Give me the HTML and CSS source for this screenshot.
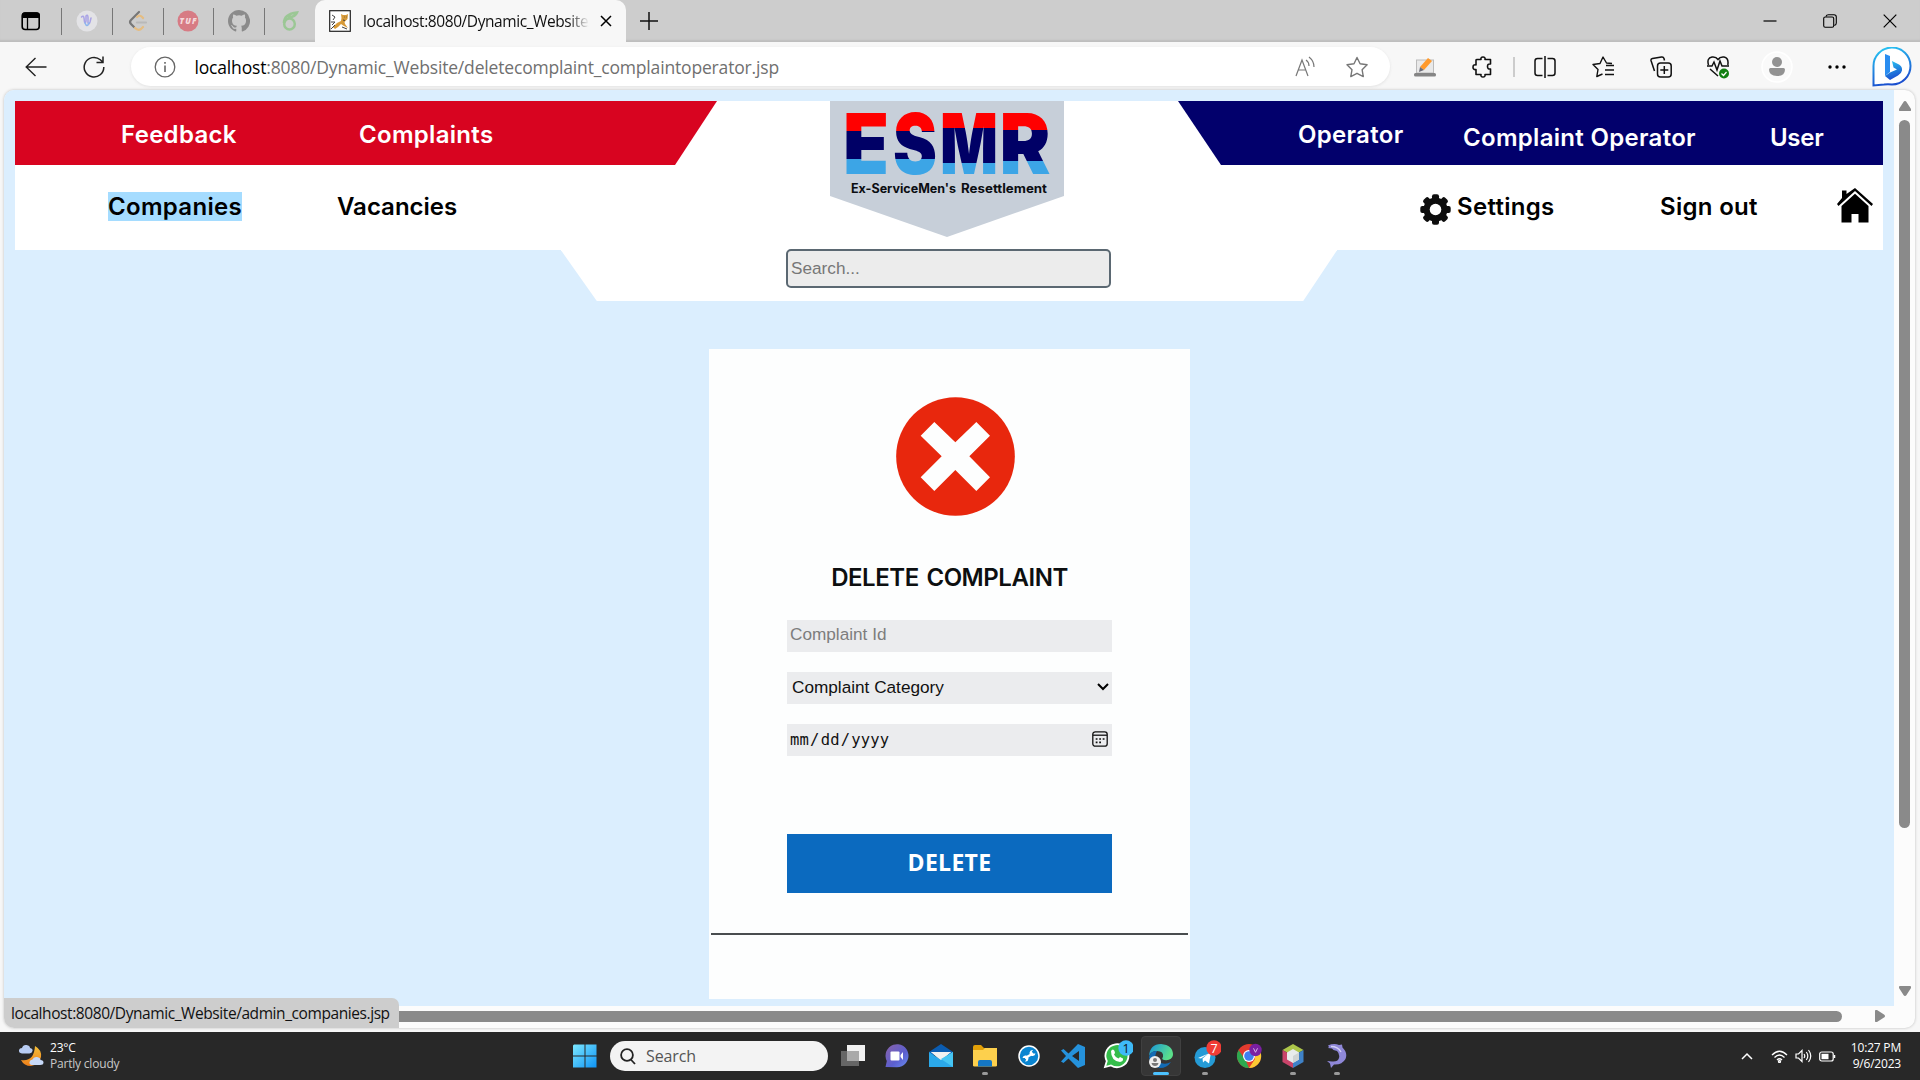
FILE: index.html
```
<!DOCTYPE html>
<html lang="en">
<head>
<meta charset="utf-8">
<title>Delete Complaint</title>
<link rel="stylesheet" href="styles.css">
</head>
<body>
<div class="screen">
  <div class="tabbar">
    <div class="pinned">
      <span class="pin first"><svg width="20" height="20" viewBox="0 0 20 20"><rect x="1.2" y="2" width="17" height="16.5" rx="3" fill="none" stroke="#000" stroke-width="1.6"/><path d="M1 7V4.5Q1 1.300 4 1.300H15.500Q19 1.300 19 4.500V7Z"/><path d="M6.500 7V18" stroke="#000" stroke-width="1.300"/></svg></span>
      <span class="pin"><svg width="22" height="22" viewBox="0 0 22 22"><circle cx="11" cy="11" r="10.500" fill="#e3e3e6"/><path d="M5.500 7q2-2 2.500 1l.5 4q1 2 1.500-1V6q1.500-2 2 1v6q1 2 2-1l1-4" fill="none" stroke="#a9a3e6" stroke-width="1.500" stroke-linecap="round"/><path d="M9 13q2 5 4 0" fill="none" stroke="#8fb6ee" stroke-width="1.600" stroke-linecap="round"/></svg></span>
      <span class="pin"><svg width="22" height="22" viewBox="0 0 22 22" fill="none" stroke-width="2.200" stroke-linecap="round"><path d="M12 2L4 10q-2 2 0 4l3 3" stroke="#777"/><path d="M8 18q3 3 6 1l2-2M10 7q3-3 6 1" stroke="#e5bd82"/><path d="M10 12.500h9" stroke="#b9b9b9"/></svg></span>
      <span class="pin"><svg width="22" height="22" viewBox="0 0 22 22"><circle cx="11" cy="11" r="10.500" fill="#d77b84"/><text x="2.500" y="14" class="tuf" textLength="17">TUF</text></svg></span>
      <span class="pin"><svg width="22" height="22" viewBox="0 0 16 16" fill="#8b8b8b"><path d="M8 0C3.580 0 0 3.580 0 8c0 3.540 2.290 6.530 5.470 7.590.4.070.55-.17.55-.38 0-.19-.01-.82-.01-1.490-2.010.37-2.530-.49-2.690-.94-.09-.23-.48-.94-.82-1.130-.28-.15-.68-.52-.01-.53.63-.01 1.080.58 1.230.82.72 1.210 1.870.87 2.330.66.070-.52.28-.87.51-1.070-1.780-.2-3.640-.89-3.640-3.950 0-.87.31-1.590.82-2.150-.08-.2-.36-1.020.08-2.120 0 0 .67-.21 2.200.82a7.500 7.500 0 0 1 4 0c1.530-1.040 2.200-.82 2.200-.82.44 1.100.16 1.920.08 2.120.51.56.82 1.270.82 2.150 0 3.070-1.870 3.750-3.650 3.950.29.25.54.73.54 1.480 0 1.070-.01 1.930-.01 2.200 0 .21.15.46.55.38A8 8 0 0 0 8 0Z"/></svg></span>
      <span class="pin last"><svg width="22" height="22" viewBox="0 0 22 22" fill="none" stroke="#9bc795" stroke-width="2.500"><ellipse cx="10.500" cy="14" rx="5.300" ry="5.500"/><path d="M5 13Q5 4 18 2.500q-2 5-9 4.500"/></svg></span>
    </div>
    <div class="tab">
      <svg width="22" height="22" viewBox="0 0 22 22"><rect x=".7" y=".7" width="20.600" height="20.600" fill="#fff" stroke="#222" stroke-width="1.200"/><path d="M4 17l4-4 4-2 .5-3L12 4l2 1h3l2-1-.5 5-3 3 .5 2 3 4-4-2-3-2-3 3-3 2Z" fill="#d79a38"/><path d="M3 5l3 2-2 3M2 19l4-4M15 7h.5M17 7h.5M14 10l2 .5M13 17l5 2M2 12h4l-3 3" stroke="#444" stroke-width="1" fill="none"/></svg>
      <span class="tab-title">localhost:8080/Dynamic_Website/</span>
      <svg class="tab-close" width="12" height="12" viewBox="0 0 12 12" stroke="#000" stroke-width="1.500"><path d="M1 1l10 10M11 1L1 11"/></svg>
    </div>
    <svg class="new-tab" width="18" height="18" viewBox="0 0 18 18" stroke="#111" stroke-width="1.500"><path d="M9 0v18M0 9h18"/></svg>
    <div class="win">
      <svg width="14" height="14" viewBox="0 0 14 14" stroke="#000" stroke-width="1.200"><path d="M.5 7h13"/></svg>
      <svg width="14" height="14" viewBox="0 0 14 14" fill="none" stroke="#000" stroke-width="1.100"><rect x=".7" y="3" width="10" height="10.300" rx="1.500"/><path d="M3 2.500Q3.500.7 5.500.7h5.500q2.300 0 2.300 2.300v6q0 2-2 2.500"/></svg>
      <svg width="14" height="14" viewBox="0 0 14 14" stroke="#000" stroke-width="1.200"><path d="M.7.7l12.600 12.600M13.300.7L.7 13.300"/></svg>
    </div>
  </div>

  <div class="toolbar">
    <span class="tb"><svg width="22" height="20" viewBox="0 0 22 20" fill="none" stroke="#222" stroke-width="1.400"><path d="M21.500 10H1M10.500 1L1.200 10l9.300 9"/></svg></span>
    <span class="tb"><svg width="22" height="22" viewBox="0 0 22 22" fill="none" stroke="#222" stroke-width="1.500"><path d="M20.800 11a9.800 9.800 0 1 1-3.500-7.300l2.400 2.300M20 .5v6h-6.500"/></svg></span>
    <div class="address">
      <svg width="22" height="22" viewBox="0 0 22 22" fill="none" stroke="#666" stroke-width="1.300"><circle cx="11" cy="11" r="9.800"/><path d="M11 9.500v6.500M11 6v1.700" stroke-width="1.600"/></svg>
      <span class="url"><b>localhost</b>:8080/Dynamic_Website/deletecomplaint_complaintoperator.jsp</span>
      <svg class="read" width="22" height="22" viewBox="0 0 22 22" fill="none" stroke="#777" stroke-width="1.200"><path d="M2 20L8 4l6 16M4 14h8M12 4q3 2 3 6M15 1q5 4 5 10"/></svg>
      <svg class="fav" width="24" height="22" viewBox="0 0 24 22" fill="none" stroke="#777" stroke-width="1.400" stroke-linejoin="round"><path d="M12 1.500l3.100 6.300 7 1-5 4.900 1.200 6.900-6.300-3.300-6.200 3.300 1.200-6.900-5-4.900 7-1Z"/></svg>
    </div>
    <span class="tb"><svg width="22" height="22" viewBox="0 0 22 22"><rect x="2.500" y="4" width="17" height="13" fill="#e9e9e9" stroke="#bbb"/><rect x="0" y="17" width="22" height="3.500" rx="1.500" fill="#858585"/><path d="M6 11l8-9 4 3-8 9Z" fill="#ff9a2c"/><path d="M6 11l4 3-5 2Z" fill="#6d6d78"/></svg></span>
    <span class="tb"><svg width="22" height="22" viewBox="0 0 22 22" fill="none" stroke="#111" stroke-width="1.600" stroke-linejoin="round"><path d="M5 3.500h4q-.5-2.500 2-2.500t2 2.500h5.500V8q-3-.5-3 2.500t3 2.500v5.500H13q.5 2.500-2 2.500t-2-2.500H4V13.500q-3 .5-3-2.300t3-2.300V4Z"/></svg></span>
    <span class="divider"></span>
    <span class="tb"><svg width="22" height="22" viewBox="0 0 22 22" fill="none" stroke="#111" stroke-width="1.500"><path d="M8.500 2.500H3.500Q1 2.500 1 5v12q0 2.500 2.500 2.500h5M13.500 2.500h5Q21 2.500 21 5v12q0 2.500-2.500 2.500h-5M11 0v22"/></svg></span>
    <span class="tb"><svg width="22" height="22" viewBox="0 0 22 22" fill="none" stroke="#111" stroke-width="1.400" stroke-linejoin="round"><path d="M20 7.500l-5.500-.5L11 1 8 7.500l-7 1 5 5-1.200 7L10.500 18M14 9.500h8M13 14h9M13 18.500h9"/></svg></span>
    <span class="tb"><svg width="22" height="22" viewBox="0 0 22 22" fill="none" stroke="#111" stroke-width="1.500"><path d="M4.500 15L1 4.500Q.7 3 2.500 2.500l9-1.500q2-.3 2.500 1.500l.5 2"/><rect x="7.500" y="7" width="13.700" height="14" rx="3"/><path d="M14.300 10v8M10.300 14h8"/></svg></span>
    <span class="tb"><svg width="22" height="24" viewBox="0 0 22 24" fill="none" stroke="#111" stroke-width="1.500"><path d="M1.500 10Q-.5 3 5 2q4-.5 6 2.500Q13 1.500 17 2q5 1 3.800 8M0 11h5l2-4 3 8 3-9 2 5h7M3 14l8 7"/><circle cx="17" cy="18.500" r="5" fill="#128012" stroke="none"/><path d="M14.500 18.500l2 2 3-3.500" stroke="#fff" stroke-width="1.200"/></svg></span>
    <span class="tb"><svg width="32" height="32" viewBox="0 0 32 32"><circle cx="16" cy="16" r="15" fill="#fafafa" stroke="#fff" stroke-width="1.500"/><circle cx="16" cy="11" r="5" fill="#929292"/><path d="M8 18.500q0-1.500 1.500-1.500h13q1.500 0 1.500 1.500Q24 25 16 25t-8-6.500Z" fill="#929292"/></svg></span>
    <span class="tb"><svg width="18" height="6" viewBox="0 0 18 6"><circle cx="2" cy="3" r="1.700"/><circle cx="9" cy="3" r="1.700"/><circle cx="16" cy="3" r="1.700"/></svg></span>
    <span class="tb"><svg width="40" height="40" viewBox="0 0 40 40"><defs><linearGradient id="bg" x1="0" y1="0" x2=".3" y2="1"><stop offset="0" stop-color="#29cdf5"/><stop offset="1" stop-color="#1b50cf"/></linearGradient></defs><path d="M1.500 38.500V19.500A18.500 18.500 0 1 1 20 37.500q-4-.5-8 0Z" fill="#fff" stroke="url(#bg)" stroke-width="2"/><path d="M13 7l5 2v16l-5 4Z" fill="#2a8df0"/><path d="M20 14l7 3.500q3.500 2 3 6-.5 3-4 5L18 33l-5-4 5-3.500 7-3-3.500-2Z" fill="url(#bg)"/></svg></span>
  </div>

  <div class="viewport">
    <main class="page">
      <header class="site">
        <div class="band">
          <nav class="red"><a class="n1">Feedback</a><a class="n2">Complaints</a></nav>
          <nav class="navy"><a class="n3">Operator</a><a class="n4">Complaint Operator</a><a class="n5">User</a></nav>
        </div>
        <nav class="second">
          <a class="n6"><mark>Companies</mark></a><a class="n7">Vacancies</a>
          <svg class="gear" width="31" height="31" viewBox="0 0 31 31"><g fill="#0d0d0d"><circle cx="15.500" cy="15.500" r="12"/><rect x="12" y=".3" width="7" height="30.400" rx="2"/><rect x="12" y=".3" width="7" height="30.400" rx="2" transform="rotate(45 15.500 15.500)"/><rect x="12" y=".3" width="7" height="30.400" rx="2" transform="rotate(90 15.500 15.500)"/><rect x="12" y=".3" width="7" height="30.400" rx="2" transform="rotate(135 15.500 15.500)"/></g><circle cx="15.500" cy="15.500" r="5.800" fill="#fff"/></svg>
          <a class="n8">Settings</a><a class="n9">Sign out</a>
          <svg class="home" width="36" height="35" viewBox="0 0 36 35"><path d="M5 10V2.500h4.500V6L18 0l18 16-1.500 2L18 3 1.500 18 0 16Z"/><path d="M18 5.800L31.500 18v16.500h-10V26h-7v8.500H4.500V18Z"/></svg>
        </nav>
        <div class="tail"><input class="search" placeholder="Search..."></div>
        <svg class="logo" width="234" height="136" viewBox="0 0 234 136">
          <defs>
            <linearGradient id="ge" gradientUnits="userSpaceOnUse" x1="0" y1="0" x2="0" y2="100"><stop offset=".3" stop-color="#f00"/><stop offset=".3" stop-color="#000066"/><stop offset=".58" stop-color="#000066"/><stop offset=".58" stop-color="#3ca5e6"/></linearGradient>
            <linearGradient id="gm" gradientUnits="userSpaceOnUse" x1="0" y1="0" x2="0" y2="100"><stop offset=".27" stop-color="#f00"/><stop offset=".27" stop-color="#000066"/><stop offset=".62" stop-color="#000066"/><stop offset=".62" stop-color="#3ca5e6"/></linearGradient>
            <linearGradient id="gr" gradientUnits="userSpaceOnUse" x1="0" y1="0" x2="0" y2="100"><stop offset=".285" stop-color="#f00"/><stop offset=".285" stop-color="#000066"/><stop offset=".6" stop-color="#000066"/><stop offset=".6" stop-color="#3ca5e6"/></linearGradient>
          </defs>
          <path d="M0 0H234V95L117 136 0 95Z" fill="#c7cfd9"/>
          <g class="esmr">
            <text x="13" y="72.500" textLength="46" lengthAdjust="spacingAndGlyphs" fill="url(#ge)">E</text>
            <text x="63" y="72.500" textLength="44" lengthAdjust="spacingAndGlyphs" fill="url(#ge)">S</text>
            <text x="110" y="72.500" textLength="58" lengthAdjust="spacingAndGlyphs" fill="url(#gm)">M</text>
            <text x="169.500" y="72.500" textLength="51" lengthAdjust="spacingAndGlyphs" fill="url(#gr)">R</text>
          </g>
          <text class="sub" x="21" y="92" textLength="105" lengthAdjust="spacingAndGlyphs">Ex-ServiceMen's</text>
          <text class="sub" x="131" y="92" textLength="86" lengthAdjust="spacingAndGlyphs">Resettlement</text>
        </svg>
      </header>

      <form class="card">
        <svg class="cross" width="119" height="119" viewBox="588 172 357 357"><circle cx="766.500" cy="350.500" r="178" fill="#e8270d"/><path d="M703 247l63 61 63-61 41 41-62 62 62 63-41 41-63-63-63 63-41-41 63-63-63-62Z" fill="#fdfefe"/></svg>
        <h1>DELETE COMPLAINT</h1>
        <div class="field hint">Complaint Id</div>
        <div class="field pick">Complaint Category<svg width="12" height="8" viewBox="0 0 12 8" fill="none" stroke="#000" stroke-width="2"><path d="M1 1l5 5 5-5"/></svg></div>
        <div class="field date"><span><i>mm</i><i>/</i><i>dd</i><i>/</i><i>yyyy</i></span><svg width="16" height="16" viewBox="0 0 16 16" fill="none" stroke="#111" stroke-width="1.300"><rect x=".8" y=".8" width="14.400" height="14.400" rx="2.500"/><path d="M1 4.200h14"/><path d="M3.700 8h9M3.700 11.300h6" stroke-width="1.700" stroke-dasharray="1.800 1.700"/></svg></div>
        <button type="button">DELETE</button>
        <hr>
      </form>
    </main>
    <div class="vbar"><svg width="12" height="10" viewBox="0 0 12 10"><path d="M6 0q1 0 1.500 1L12 8q.5 2-1 2H1Q-.5 10 0 8L4.500 1Q5 0 6 0Z" fill="#8a8a8a"/></svg><span></span><svg width="12" height="10" viewBox="0 0 12 10"><path d="M6 10q1 0 1.500-1L12 2q.5-2-1-2H1Q-.5 0 0 2l4.500 7q.5 1 1.500 1Z" fill="#8a8a8a"/></svg></div>
    <div class="hbar"><span></span><svg width="10" height="12" viewBox="0 0 10 12"><path d="M10 6q0 1-1 1.500L2 12Q0 12.500 0 11V1Q0-.5 2 0l7 4.500q1 .5 1 1.500Z" fill="#8a8a8a"/></svg></div>
    <div class="status">localhost:8080/Dynamic_Website/admin_companies.jsp</div>
  </div>

  <div class="taskbar">
    <div class="weather">
      <svg width="26" height="24" viewBox="0 0 26 24"><defs><linearGradient id="mn" x1="0" y1="0" x2="0" y2="1"><stop offset="0" stop-color="#f5c03a"/><stop offset="1" stop-color="#ee7f1a"/></linearGradient></defs><path d="M17 2q7 4 6 11-2 8-10 9-7 0-10-6Q16 18 17 2Z" fill="url(#mn)"/><path d="M4 9.500q-3.500-.5-3-3.500.5-2 3-2 1-3.500 4.500-3T12 4q3 .5 2.500 3-.5 2-3 2.500Z" fill="#b9cdf3"/><path d="M14 21q-3-.5-2.500-3t3-2.500q1-3 4.500-2.500t3.500 3q3 0 3 2.500T22 21Z" fill="#c7d9f8"/></svg>
      <p>23°C<br><span>Partly cloudy</span></p>
    </div>
    <svg class="start" width="24" height="24" viewBox="0 0 24 24"><defs><linearGradient id="w" x1="0" y1="0" x2="1" y2="1"><stop offset="0" stop-color="#7ce8ff"/><stop offset="1" stop-color="#0e93f5"/></linearGradient></defs><path d="M0 1.500L1 .5h10.500V11.500H0ZM12.500.5H23.500V11.500h-11ZM0 12.500h11.500V23.500H0ZM12.500 12.500H23.500V23.500h-11Z" fill="url(#w)"/></svg>
    <div class="find"><svg width="16" height="17" viewBox="0 0 16 17" fill="none" stroke="#222" stroke-width="1.800"><circle cx="7" cy="7" r="5.900"/><path d="M10.800 11.500L15 16"/></svg>Search</div>
    <div class="apps">
      <span><svg width="24" height="24" viewBox="0 0 24 24"><rect x="6" y="1" width="18" height="16" fill="#f1f1f1"/><rect y="7" width="18" height="15" fill="#666"/><rect x="6" y="7" width="12" height="10" fill="#a9a9a9"/></svg></span>
      <span><svg width="24" height="24" viewBox="0 0 24 24"><defs><linearGradient id="ct" x1="0" y1="0" x2="1" y2="1"><stop offset="0" stop-color="#8a62a8"/><stop offset=".6" stop-color="#5b5fcf"/><stop offset="1" stop-color="#6a8df0"/></linearGradient></defs><path d="M.5 23l1.300-6A11.500 11.500 0 1 1 12 23.200Z" fill="url(#ct)"/><rect x="5.500" y="7.500" width="9" height="9" rx="1" fill="#fff"/><path d="M15.500 11l2.500-3v8l-2.500-3Z" fill="#fff"/></svg></span>
      <span><svg width="24" height="24" viewBox="0 0 24 24"><path d="M0 8L12 0l12 8v3H0Z" fill="#0b5cb0"/><path d="M2 8h20L12 17Z" fill="#eee"/><path d="M0 8l12 8 12-8v15H0Z" fill="#2ba9ea"/><path d="M2 8h20l-10 7Z" fill="#f2f2f2"/><path d="M12 15l12 8V8Z" fill="#46c6f4"/></svg></span>
      <span class="run"><svg width="24" height="24" viewBox="0 0 24 24"><path d="M0 3q0-2 2-2h6l3 3h13v18H0Z" fill="#e2a008"/><path d="M0 6h10l2-2h12v17q0 1.500-1.500 1.500h-21Q0 22.500 0 21Z" fill="#fdd04d"/><path d="M5 22.500V18q0-2 2-2h10q2 0 2 2v4.500Z" fill="#1477c4"/></svg></span>
      <span><svg width="24" height="24" viewBox="0 0 24 24"><circle cx="12" cy="12" r="10" fill="#0a85d1" stroke="#fff" stroke-width="1.500"/><path d="M8 14l8-4.500" stroke="#fff" stroke-width="2.200"/><path d="M18.500 9.500a3 3 0 1 1-2.500-3.500l-1.200 1.800 1.200 1.700ZM5.500 14a3 3 0 1 1 2.500 3.500l1.200-1.800L8 14Z" fill="#fff"/></svg></span>
      <span><svg width="24" height="24" viewBox="0 0 24 24"><path d="M17 0l7 3v18l-7 3L7.500 14.500 2.500 19 0 17.500l5-5.500-5-5.500L2.500 5l5 4.500ZM18 7l-7 5 7 5Z" fill="#2592dc" fill-rule="evenodd"/></svg></span>
      <span><svg width="32" height="32" viewBox="0 0 32 32"><path d="M4 27l1.800-6A11.500 11.500 0 1 1 10 25.500Z" fill="#35bd4b" stroke="#fff" stroke-width="1.800"/><path d="M10 11q2-3 3.500 0l.5 2-1 1.500q1.500 3 4.500 4l1.500-1.500 3 1.500q.5 3-3 3.500Q10 21 10 11Z" fill="#fff"/><circle cx="25" cy="8" r="7.700" fill="#3ebaf8"/><text class="badge dark" x="25" y="12.500">1</text></svg></span>
      <span class="active"><svg width="26" height="26" viewBox="0 0 26 26"><defs><linearGradient id="ed" x1="0" y1="0" x2="1" y2=".4"><stop offset="0" stop-color="#1793dc"/><stop offset="1" stop-color="#5be08a"/></linearGradient></defs><path d="M1 13Q2 1 13 1q12 1 12 11-1 6-9 5-3-1-1-3 1-6-6-6-6 0-8 5Z" fill="url(#ed)"/><path d="M1 14Q3 7 9 8q-5 9 4 12 5 2 10-1-4 6-11 6Q2 24 1 14Z" fill="#126bb5"/><circle cx="7" cy="19" r="6" fill="#eee"/><circle cx="7" cy="17" r="2" fill="#777"/><path d="M3.500 20h7q-.5 3-3.500 3t-3.500-3Z" fill="#777"/></svg></span>
      <span class="run"><svg width="32" height="32" viewBox="0 0 32 32"><circle cx="16" cy="17.500" r="10.500" fill="#259bd6"/><path d="M9 18l13-5.500-2 11-4-3-2 2-.5-4 6-5-7.500 5Z" fill="#fff"/><circle cx="25" cy="8" r="7.700" fill="#f13c35"/><text class="badge" x="25" y="12.500">7</text></svg></span>
      <span><svg width="26" height="26" viewBox="0 0 26 26"><circle cx="13" cy="13" r="12" fill="#e33b2e"/><path d="M2.600 7L10 18l3 7A12 12 0 0 1 2.600 7Z" fill="#2da94f"/><path d="M13 25l6-9V9h5.500A12 12 0 0 1 13 25Z" fill="#fcc934"/><circle cx="13" cy="13" r="6" fill="#fff"/><circle cx="13" cy="13" r="4.800" fill="#3f7ff0"/><circle cx="19.500" cy="7" r="6.200" fill="#7a1fa2"/><path d="M17.500 5.300l2 4 2-4" fill="none" stroke="#d8b4e8"/></svg></span>
      <span class="run"><svg width="24" height="24" viewBox="0 0 24 24"><path d="M12 0l10.500 6-10.500 6L1.500 6Z" fill="#adc64a"/><path d="M1.500 6L12 12v12L1.500 18Z" fill="#c9446a"/><path d="M22.500 6L12 12v12l10.500-6Z" fill="#3f82c8"/><path d="M12 5l6 3.500v7L12 19l-6-3.500v-7Z" fill="#e8ecec"/><path d="M12 12l6-3.500v7L12 19Z" fill="#cfd4d4"/></svg></span>
      <span class="run"><svg width="24" height="24" viewBox="0 0 24 24"><path d="M3 1.500Q9-1 14 1l3-.5.5 3Q23 9 20.500 15 17 21 9 20.500L6 24l-1-4.500L2 17l5 .5q6 .5 7-3.500t-2-7L8.500 6 7 4.500 3 4l1-1Z" fill="#8f88d8"/><path d="M6 2.500q7 0 10 5.500" stroke="#d3d0f5" stroke-width="1.500" fill="none"/></svg></span>
    </div>
    <div class="tray">
      <svg width="12" height="8" viewBox="0 0 12 8" fill="none" stroke="#fff" stroke-width="1.500"><path d="M1 7l5-5 5 5"/></svg>
      <svg class="wifi" width="17" height="13" viewBox="0 0 17 13" fill="none" stroke="#fff" stroke-width="1.300"><path d="M1 5Q8.500-2.500 16 5M3.500 7.500q5-5 10 0M6 10q2.500-2.500 5 0"/><circle cx="8.500" cy="11.500" r="1"/></svg>
      <svg class="snd" width="17" height="14" viewBox="0 0 17 14" fill="none" stroke="#fff" stroke-width="1.200"><path d="M1 5h2.500L7 1.500v11L3.500 9H1ZM9 5q1.500 2 0 4M11.300 3q3 4 0 8M13.500 1q4.500 6 0 12"/></svg>
      <svg class="bat" width="17" height="11" viewBox="0 0 17 11"><rect x=".7" y="1" width="13.500" height="9" rx="2" fill="none" stroke="#fff" stroke-width="1.200"/><rect x="2.500" y="2.800" width="7" height="5.400" fill="#fff"/><path d="M15.500 4v3" stroke="#fff" stroke-width="1.500"/></svg>
      <p>10:27 PM<br>9/6/2023</p>
    </div>
  </div>
</div>
</body>
</html>
```

FILE: styles.css
```
* { box-sizing: border-box; }
body { margin: 0; overflow: hidden; font-family: "Open Sans", "Noto Sans", sans-serif; }
svg { display: block; flex: none; }
.screen { width: 1920px; height: 1080px; display: flex; flex-direction: column; background: #f7f7f7; }

.tabbar { height: 42px; flex: none; display: flex; align-items: center; background: #cdcdcd; box-shadow: inset 0 -3px 2px -1px #bdbdbd; }
.pinned { display: flex; width: 315px; height: 42px; align-items: center; }
.pin { width: 51px; height: 27px; display: flex; align-items: center; justify-content: center; border-right: 1px solid #777; }
.pin.first { width: 62px; padding-left: 2px; }
.pin:nth-child(n+4) { width: 50.500px; }
.pin.last { border: 0; }
.tuf { font: italic 800 8px "Open Sans", sans-serif; fill: #f5d9dc; }
.tab { width: 311px; height: 42px; background: #f7f7f7; border-radius: 10px 10px 0 0; display: flex; align-items: center; padding: 0 0 1px 14px; }
.tab-title { width: 226px; margin-left: 12px; overflow: hidden; white-space: nowrap; font-size: 15.500px; letter-spacing: -.42px; color: #111; -webkit-mask-image: linear-gradient(90deg, #000 205px, transparent 226px); mask-image: linear-gradient(90deg, #000 205px, transparent 226px); }
.tab-close { margin-left: 11px; }
.new-tab { margin-left: 14px; }
.win { margin-left: auto; margin-right: 23px; display: flex; gap: 46px; }

.toolbar { height: 48px; flex: none; display: grid; align-items: center; justify-items: center; padding: 1px 0 0 12px; grid-template-columns: 48px 67px 1270px 56px 60px 2px 60px 56px 59px 55px 63px 58px 51px; }
.address { width: 1259px; height: 39px; margin-left: -4px; border-radius: 20px; background: #fff; box-shadow: 0 1px 3px #e2e2e2; display: flex; align-items: center; padding-left: 23px; }
.url { margin-left: 19px; font-size: 17.500px; letter-spacing: -.17px; color: #707070; white-space: nowrap; }
.url b { font-weight: 400; color: #000; }
.read { margin-left: auto; }
.fav { margin: 0 21px 0 29px; }
.divider { width: 2px; height: 20px; background: #ccc; }

.viewport { position: relative; width: 1911px; height: 938px; flex: none; margin-left: 4px; border-radius: 10px; overflow: hidden; background: #fcfcfc; display: grid; grid-template: 916px 22px / 1890px 21px; box-shadow: 0 0 3px #bbb; }
.page { background: #dbeefe; overflow: hidden; padding: 11px 0 0 11px; }
.site { position: relative; width: 1868px; height: 200px; font: 600 24px/29px Inter, sans-serif; }
.band { height: 64px; background: #fff; display: flex; justify-content: space-between; }
.red, .navy { display: flex; color: #fff; padding-top: 19px; height: 64px; }
.red { width: 702px; background: #d80420; clip-path: polygon(0 0, 100% 0, 660px 100%, 0 100%); padding-left: 106px; }
.navy { width: 705px; background: #02006c; clip-path: polygon(0 0, 100% 0, 100% 100%, 43px 100%); padding-left: 120px; }
.site a { display: block; white-space: nowrap; letter-spacing: .3px; }
.n1 { width: 238px; }
.n3 { width: 165px; }
.n4 { width: 307px; margin-top: 3px; }
.n5 { margin-top: 3px; }
.site .n5 { letter-spacing: -.3px; }
.second { height: 85.300px; background: #fff; display: flex; padding: 27px 0 0 93px; color: #000; }
mark { background: #a5dcff; color: #000; }
.n6 { width: 229px; }
.n7 { width: 1083px; }
.site .n7 { letter-spacing: 0; }
.n8 { width: 203px; margin-left: 6px; }
.n9 { width: 178px; }
.gear { margin-top: 2px; }
.home { margin-top: -4px; margin-left: -1px; }
.tail { height: 51px; background: #fff; clip-path: polygon(546px -5px, 1322px -5px, 1322px 0, 1288px 100%, 582px 100%, 546px 0); }
.search { display: block; position: relative; top: -1.300px; width: 325px; height: 39px; margin-left: 771px; border: 2px solid #5b6872; border-radius: 5px; background: #ececec; padding: 0 3px; font: 17.200px "Liberation Sans", sans-serif; }
.search::placeholder { color: #777; }
.logo { position: absolute; left: 815px; top: 0; overflow: visible; }
.esmr { font: 900 84px Inter, sans-serif; }
.sub { font: 700 12.500px Inter, sans-serif; fill: #0b0d12; }

.card { width: 481px; height: 650px; margin: 48px 0 0 694px; background: #fdfefe; display: flex; flex-direction: column; align-items: center; padding: 48px 2px 0; }
.cross { margin-left: 12px; }
.card h1 { margin: 45.500px 0 26px; font: 600 24px/32px Inter, sans-serif; letter-spacing: -.45px; word-spacing: 2px; color: #0d0f10; white-space: nowrap; }
.field { width: 325px; height: 32px; margin-bottom: 20px; background: #ebecee; display: flex; align-items: center; justify-content: space-between; padding: 0 3px 2px; font: 17.200px "Liberation Sans", sans-serif; color: #111; }
.hint { color: #7d7d7d; }
.pick { padding: 0 3px 1px 5px; }
.date { font-family: "DejaVu Sans Mono", monospace; font-size: 15.500px; padding: 0 4px 0 3px; }
.date svg { margin-top: -2px; }
.date i { font-style: normal; letter-spacing: .2px; margin-right: 1px; }
.card button { width: 325px; height: 59px; margin-top: 58px; flex: none; border: 0; background: #0b6abf; color: #fff; font: 700 23px "Open Sans", sans-serif; letter-spacing: .3px; padding: 0 0 3px; }
.card hr { width: 477px; height: 2px; flex: none; border: 0; margin: 40.500px 0 0; background: #494d4f; }

.vbar { display: flex; flex-direction: column; align-items: center; padding: 11px 0 0; }
.vbar span { width: 11px; height: 708px; margin: 9px 0 158px; border-radius: 6px; background: #8a8a8a; }
.hbar { grid-column: 1 / 3; display: flex; align-items: center; padding-bottom: 2px; }
.hbar span { width: 1818px; height: 11px; margin: 0 33px 0 20px; border-radius: 6px; background: #8a8a8a; }
.status { position: absolute; left: 0; bottom: 0; width: 395px; height: 30px; border-radius: 0 7px 0 0; background: #cdcdcd; padding-left: 7px; font-size: 15.500px; line-height: 31px; letter-spacing: -.42px; white-space: nowrap; color: #111; }

.taskbar { height: 48px; margin-top: auto; flex: none; background: #282828; display: flex; align-items: center; color: #fff; }
.taskbar p { margin: 0; font-size: 12px; line-height: 16px; letter-spacing: -.2px; }
.weather { width: 573px; display: flex; padding-left: 18px; align-items: center; gap: 6px; }
.weather span { color: #c9c9c9; }
.find { width: 218px; height: 30px; margin-left: 13px; border-radius: 15px; background: #f3f3f3; color: #555; display: flex; align-items: center; gap: 10px; padding-left: 10px; font-size: 16px; letter-spacing: -.1px; }
.apps { display: flex; margin-left: 3px; }
.apps span { position: relative; width: 44px; height: 40px; display: flex; align-items: center; justify-content: center; }
.apps .active { width: 40px; margin: 0 2px; background: #363636; border: 1px solid #404040; border-radius: 4px; }
.apps .run::after, .apps .active::after { content: ""; position: absolute; bottom: 1px; width: 6px; height: 3px; border-radius: 2px; background: #9a9a9a; }
.apps .active::after { width: 16px; bottom: 0; background: #4cc2ff; }
.badge { font: 12.500px "Open Sans", sans-serif; text-anchor: middle; fill: #fff; }
.badge.dark { fill: #111; }
.tray { margin-left: auto; display: flex; align-items: center; padding-right: 19px; }
.tray p { width: 60px; text-align: right; margin-left: 5px; }
.wifi { margin-left: 18px; }
.snd { margin-left: 7.500px; }
.bat { margin-left: 7px; }
```
